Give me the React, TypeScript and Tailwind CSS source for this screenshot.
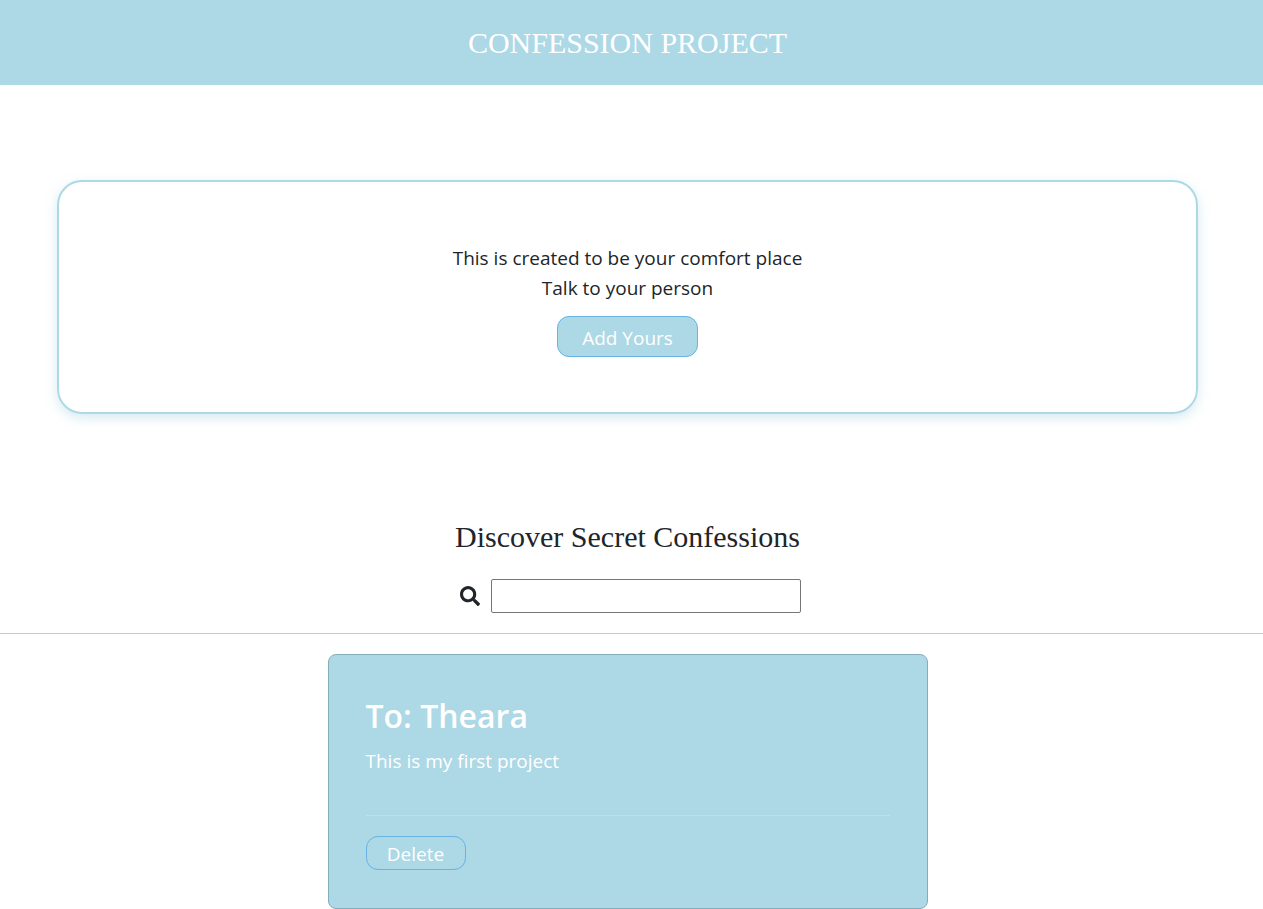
import { FaSearch } from "react-icons/fa";

export default function App() {
  return (
    <div className="min-h-screen bg-white font-['Segoe_UI','Open_Sans',sans-serif] text-[19px] leading-[30px] text-[#212529]">
      <header className="bg-[#add8e6] pt-[25px] pr-2 pb-6 text-center">
        <h1 className="font-['Liberation_Serif',serif] text-[30px] leading-9 text-white">CONFESSION PROJECT</h1>
      </header>
      <main>
        <section className="mt-[95px] mr-[65px] ml-[57px] rounded-[25px] border-2 border-[#add8e6] px-4 pt-[61px] pb-[55px] text-center shadow-[0_4px_12px_rgba(173,216,230,0.5)]">
          <p>This is created to be your comfort place</p>
          <p>Talk to your person</p>
          <button className="mt-[13px] h-[41px] w-[141px] rounded-xl border border-[#68b3e2] bg-[#add8e6] pt-0.5 text-white">Add Yours</button>
        </section>
        <section className="mt-[105px] border-b border-[#c8c9ca] pr-2 pb-5 text-center">
          <h2 className="font-['Liberation_Serif',serif] text-[30px] leading-9">Discover Secret Confessions</h2>
          <div className="mt-6 flex items-center justify-center gap-[11px] pl-[5px]">
            <label htmlFor="search" aria-label="Search"><FaSearch className="size-5" /></label>
            <input id="search" type="text" className="h-[34px] w-[310px] rounded-xs border border-[#767676] bg-white px-2" />
          </div>
        </section>
        <div className="pt-5 pr-2">
          <article className="mx-auto max-w-[600px] rounded-lg border border-[#84adba] bg-[#add8e6] px-[37px] pt-10 pb-[38px] text-white">
            <h3 className="text-[32px] leading-[42px] font-semibold">To: Theara</h3>
            <p className="mt-[9px]">This is my first project</p>
            <hr className="mt-[39px] border-[#bde0eb]" />
            <button className="mt-5 block h-[34px] w-[100px] rounded-xl border border-[#68b3e2] pt-0.5">Delete</button>
          </article>
        </div>
      </main>
    </div>
  );
}
